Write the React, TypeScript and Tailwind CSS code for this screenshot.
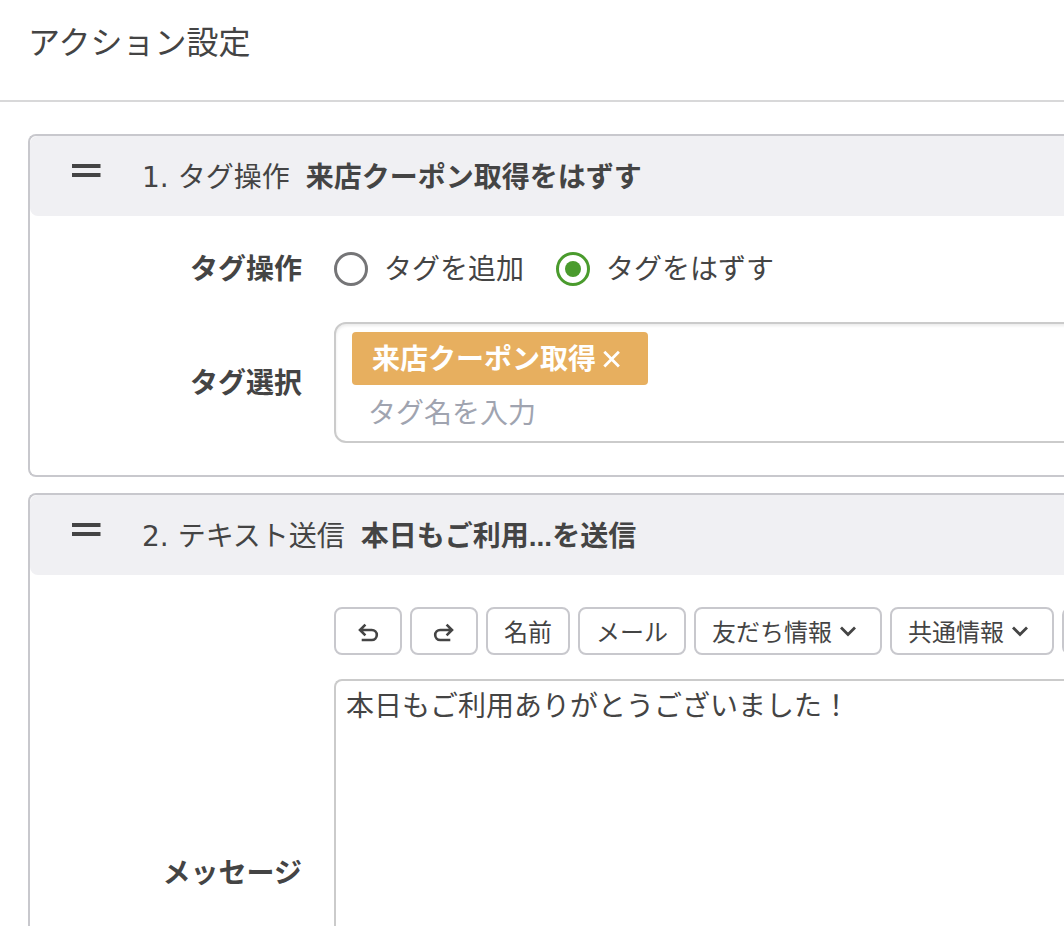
import { useState, type ReactNode } from 'react';

const border = 'border-2 border-[#c8c8cd]';

function DragHandle() {
  return (
    <svg className="w-8 h-8 shrink-0" viewBox="0 0 32 32" aria-hidden="true">
      <rect x="2" y="4" width="28.5" height="4" fill="#444" />
      <rect x="2" y="13" width="28.5" height="4" fill="#444" />
    </svg>
  );
}

function StrokeIcon({ d, width = 2.8 }: { d: string; width?: number }) {
  return (
    <svg
      className="w-8 h-8 shrink-0"
      viewBox="0 0 32 32"
      fill="none"
      stroke="currentColor"
      strokeWidth={width}
      aria-hidden="true"
    >
      <path d={d} />
    </svg>
  );
}

const CHEVRON = 'M9 12.5l7 7 7-7';
const CROSS = 'M8.3 8.8l14.6 14.6M22.9 8.8L8.3 23.4';
const UNDO = 'M13.4 9.6L8 15l5.4 5.4M8 15h11.8a5 5 0 0 1 0 10H9.7';
const REDO = 'M18.6 9.6L24 15l-5.4 5.4M24 15H12.2a5 5 0 0 0 0 10h10.1';

type ActionCardProps = {
  index: number;
  type: string;
  summary: string;
  children: ReactNode;
};

function ActionCard({ index, type, summary, children }: ActionCardProps) {
  return (
    <section className={`${border} border-r-0 rounded-l-lg`}>
      <header className="flex items-center h-20 pl-10 bg-[#f0f0f3] rounded-l-lg whitespace-nowrap">
        <DragHandle />
        <h2 className="ml-10 flex items-baseline">
          <span className="font-['DejaVu_Sans','Noto_Sans_CJK_JP',sans-serif] whitespace-pre">{index}. </span>
          <span>{type}</span>
          <strong className="ml-4 font-bold font-['Liberation_Sans','Noto_Sans_CJK_JP',sans-serif]">{summary}</strong>
        </h2>
      </header>
      <div className="flex flex-col gap-8 py-8">{children}</div>
    </section>
  );
}

const labelClass = 'w-[272px] shrink-0 pb-1 leading-[38px] text-right font-bold';

// Round radio with a coloured dot when selected
const radioClass =
  "appearance-none grid place-content-center w-[34px] h-[34px] shrink-0 rounded-full border-3 border-[#757577] bg-white checked:border-[#4a9b2d] checked:before:block checked:before:w-4 checked:before:h-4 checked:before:rounded-full checked:before:bg-[#4a9b2d] checked:before:content-['']";

type ModeRadioProps = {
  label: string;
  checked: boolean;
  onSelect: () => void;
};

function ModeRadio({ label, checked, onSelect }: ModeRadioProps) {
  return (
    <label className="flex items-center gap-4">
      <input type="radio" name="mode" className={radioClass} checked={checked} onChange={onSelect} />
      <span className="pb-1 leading-[38px]">{label}</span>
    </label>
  );
}

function ToolButton({ label, children }: { label?: string; children?: ReactNode }) {
  return (
    <button
      type="button"
      aria-label={label}
      className={`${border} flex items-center h-12 px-4 shrink-0 rounded-lg bg-white text-2xl whitespace-nowrap`}
    >
      {children}
    </button>
  );
}

export default function App() {
  const [mode, setMode] = useState('remove');
  const [message, setMessage] = useState('本日もご利用ありがとうございました！');

  return (
    <div className="h-screen overflow-hidden bg-white text-[#444] text-[28px] leading-[42px] font-['Noto_Sans_CJK_JP',sans-serif]">
      <header className="border-b-2 border-[#d8d8d9] pl-7 pt-4 pb-9">
        <h1 className="text-[32px] leading-[48px]">アクション設定</h1>
      </header>

      <main className="flex flex-col gap-4 pl-7 pt-8">
        <ActionCard index={1} type="タグ操作" summary="来店クーポン取得をはずす">
          <div className="flex items-center gap-8" role="radiogroup" aria-labelledby="mode-label">
            <span id="mode-label" className={labelClass}>タグ操作</span>
            <ModeRadio label="タグを追加" checked={mode === 'add'} onSelect={() => setMode('add')} />
            <ModeRadio label="タグをはずす" checked={mode === 'remove'} onSelect={() => setMode('remove')} />
          </div>

          <div className="flex items-center gap-8">
            <label htmlFor="tag" className={labelClass}>タグ選択</label>
            <div className="flex-1 -mr-2 flex flex-col items-start border-2 border-[#cbcbcb] rounded-l-xl pl-4 pt-2 pb-1 shadow-[inset_0_2px_3px_rgba(0,0,0,0.08)]">
              <span className="flex items-center h-[53px] px-5 rounded bg-[#e7af5f] text-white font-bold">
                <span className="pb-1 leading-[38px]">来店クーポン取得</span>
                <button type="button" aria-label="タグを削除">
                  <StrokeIcon d={CROSS} />
                </button>
              </span>
              <input
                id="tag"
                type="text"
                placeholder="タグ名を入力"
                className="w-full h-13 pl-4 outline-none bg-transparent placeholder:text-[#a0a4b0]"
              />
            </div>
          </div>
        </ActionCard>

        <ActionCard index={2} type="テキスト送信" summary="本日もご利用...を送信">
          <div className="flex items-center gap-8">
            <label htmlFor="message" className={labelClass}>メッセージ</label>
            <div className="flex-1 min-w-0 flex flex-col gap-6">
              <div className="flex gap-2 overflow-hidden">
                <ToolButton label="元に戻す">
                  <StrokeIcon d={UNDO} width={2.6} />
                </ToolButton>
                <ToolButton label="やり直す">
                  <StrokeIcon d={REDO} width={2.6} />
                </ToolButton>
                <ToolButton>名前</ToolButton>
                <ToolButton>メール</ToolButton>
                <ToolButton>
                  友だち情報
                  <StrokeIcon d={CHEVRON} />
                </ToolButton>
                <ToolButton>
                  共通情報
                  <StrokeIcon d={CHEVRON} />
                </ToolButton>
                <ToolButton label="その他" />
              </div>
              <textarea
                id="message"
                value={message}
                onChange={(e) => setMessage(e.target.value)}
                className="block w-full h-[460px] resize-none border-2 border-r-0 border-[#cbcbcb] rounded-l-lg px-2.5 py-0.5 outline-none"
              />
            </div>
          </div>
        </ActionCard>
      </main>
    </div>
  );
}
